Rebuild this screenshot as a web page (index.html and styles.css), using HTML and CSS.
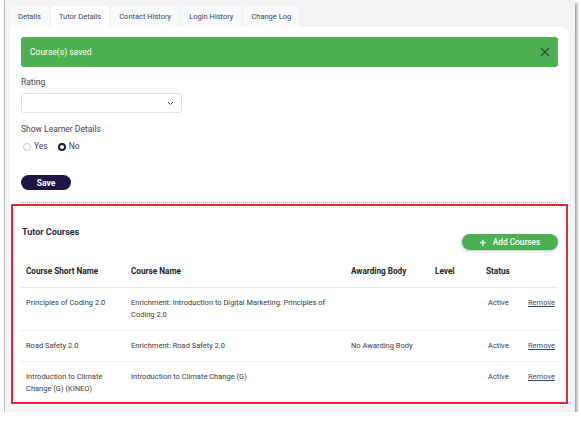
FILE: index.html
```html
<!DOCTYPE html>
<html lang="en">
<head>
  <meta charset="UTF-8" />
  <title>Tutor Details</title>
  <link rel="stylesheet" href="styles.css">
</head>
<body>

  <div class="frame">
    <div class="tabs">
      <div class="tab">Details</div>
      <div class="tab active">Tutor Details</div>
      <div class="tab">Contact History</div>
      <div class="tab">Login History</div>
      <div class="tab">Change Log</div>
    </div>

    <div class="panel">
      <div class="alert">
        <span>Course(s) saved</span>
        <svg class="alert-close" width="10" height="10" viewBox="0 0 10 10">
          <path d="M1 1 L9 9 M9 1 L1 9" stroke="#2f4f30" stroke-width="1.2" fill="none" />
        </svg>
      </div>

      <div class="field-label">Rating</div>
      <div class="select">
        <svg width="7" height="5" viewBox="0 0 7 5">
          <path d="M1 1 L3.5 3.5 L6 1" stroke="#444" stroke-width="1" fill="none" />
        </svg>
      </div>

      <div class="field-label learner">Show Learner Details</div>
      <div class="radios">
        <span class="radio"><span class="dot"></span>Yes</span>
        <span class="radio"><span class="dot checked"></span>No</span>
      </div>

      <button class="btn-save">Save</button>

      <div class="divider"></div>

      <section class="courses">
        <div class="courses-head">
          <h3>Tutor Courses</h3>
          <button class="btn-add"><span class="plus">+</span>Add Courses</button>
        </div>

        <table>
          <colgroup>
            <col style="width:105px">
            <col style="width:220px">
            <col style="width:84px">
            <col style="width:51px">
            <col style="width:42px">
            <col>
          </colgroup>
          <thead>
            <tr>
              <th>Course Short Name</th>
              <th>Course Name</th>
              <th>Awarding Body</th>
              <th>Level</th>
              <th>Status</th>
              <th></th>
            </tr>
          </thead>
          <tbody>
            <tr>
              <td>Principles of Coding 2.0</td>
              <td>Enrichment: Introduction to Digital Marketing: Principles of Coding 2.0</td>
              <td></td>
              <td></td>
              <td class="status">Active</td>
              <td><a href="#">Remove</a></td>
            </tr>
            <tr>
              <td>Road Safety 2.0</td>
              <td>Enrichment: Road Safety 2.0</td>
              <td>No Awarding Body</td>
              <td></td>
              <td class="status">Active</td>
              <td><a href="#">Remove</a></td>
            </tr>
            <tr>
              <td>Introduction to Climate Change (G) (KINEO)</td>
              <td>Introduction to Climate Change (G)</td>
              <td></td>
              <td></td>
              <td class="status">Active</td>
              <td><a href="#">Remove</a></td>
            </tr>
          </tbody>
        </table>
      </section>
    </div>
  </div>

</body>
</html>
```

FILE: styles.css
```css
* {
  box-sizing: border-box;
  margin: 0;
  padding: 0;
}

body {
  font-family: Roboto, 'Liberation Sans', sans-serif;
  font-size: 7.5px;
  line-height: 11px;
  color: #3a3a3a;
  background: #fff;
}

.frame {
  margin-left: 4px;
  width: 571px;
  background: #f2f3f5;
  border-left: 1px solid #b9b9b9;
  box-shadow: 2px 3px 3px rgba(0, 0, 0, 0.4);
  padding: 6px 6px 6px 5px;
}

.tabs {
  display: flex;
  gap: 2px;
  height: 21px;
}

.tab {
  padding: 0 8px;
  line-height: 21px;
  background: #f8f9fa;
  border-radius: 3px 3px 0 0;
  color: #3f4550;
}

.tab.active {
  background: #fff;
}

.panel {
  background: #fff;
  border-radius: 0 8px 8px 8px;
  padding: 10px 11px 2px;
}

.alert {
  height: 30px;
  background: #4caf50;
  border-radius: 3px;
  color: #fff;
  font-size: 8.5px;
  padding: 0 8px 0 9px;
  display: flex;
  justify-content: space-between;
  align-items: center;
}

.field-label {
  margin-top: 10px;
  font-size: 8.5px;
  color: #3f4654;
}

.field-label.learner {
  margin-top: 11px;
}

.select {
  margin-top: 5px;
  width: 161px;
  height: 20px;
  border: 1px solid #dcdfe4;
  border-radius: 3px;
  display: flex;
  justify-content: flex-end;
  align-items: center;
  padding-right: 7px;
}

.radios {
  display: flex;
  gap: 10px;
  margin-top: 6px;
  margin-left: 2px;
  font-size: 8.5px;
}

.radio {
  display: flex;
  align-items: center;
  gap: 3px;
  color: #3f4654;
}

.dot {
  width: 8px;
  height: 8px;
  border-radius: 50%;
  border: 1px solid #c4c8cf;
  background: #fff;
}

.dot.checked {
  border: 2.5px solid #1c1a45;
}

.btn-save {
  display: block;
  margin-top: 23px;
  width: 50px;
  height: 15px;
  border: none;
  border-radius: 999px;
  background: #1f1646;
  color: #fff;
  font-family: inherit;
  font-size: 8.5px;
  font-weight: 700;
}

.divider {
  margin-top: 12px;
  border-top: 1px dotted #a9a9a9;
}

.courses {
  margin: 1px -10px 0;
  border: 2px solid #e5252f;
  padding: 0 8px;
}

.courses-head {
  display: flex;
  justify-content: space-between;
  align-items: flex-start;
  padding-top: 21px;
}

.courses-head h3 {
  font-size: 9px;
  font-weight: 700;
  color: #1d2a48;
  margin-left: 1px;
}

.btn-add {
  margin-top: 7px;
  width: 96px;
  height: 16px;
  border: none;
  border-radius: 999px;
  background: #4caf50;
  color: #fff;
  font-family: inherit;
  font-size: 8.3px;
  font-weight: 500;
  box-shadow: 0 1px 3px rgba(0, 0, 0, 0.25);
  display: flex;
  align-items: center;
  justify-content: center;
}

.btn-add .plus {
  font-size: 11px;
  margin-right: 7px;
}

table {
  width: 100%;
  margin-top: 6px;
  border-collapse: collapse;
  table-layout: fixed;
}

th {
  text-align: left;
  font-size: 8.2px;
  font-weight: 700;
  color: #222;
  padding: 10px 5px;
  border-bottom: 1px solid #e6e8eb;
}

td {
  padding: 9px 5px;
  line-height: 12px;
  vertical-align: top;
  border-bottom: 1px solid #eceef0;
}

tbody tr:last-child td {
  border-bottom: none;
  padding-bottom: 7px;
}

td.status {
  padding-left: 7px;
}

td a {
  color: #3a4a6e;
  text-decoration: underline;
}
```
